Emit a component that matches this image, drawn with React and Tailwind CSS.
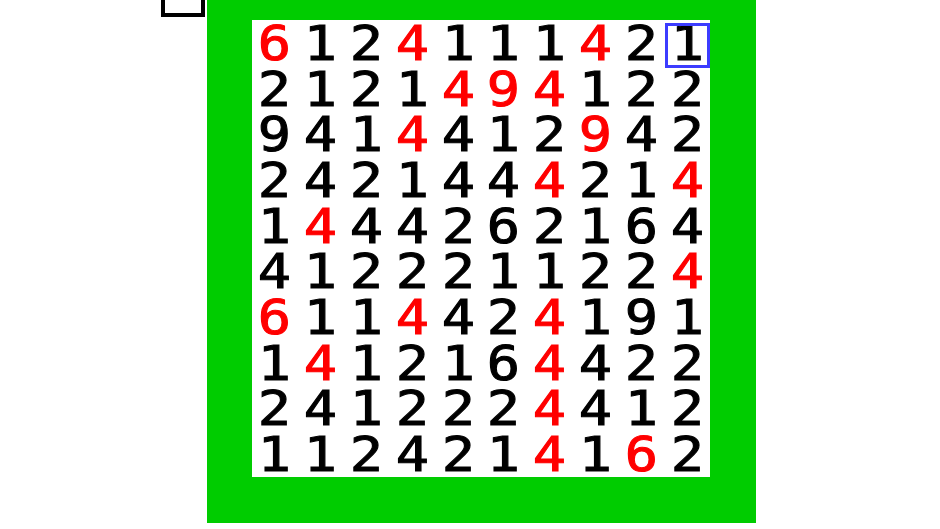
import React from "react";

const rows = [
  ["6r", "1", "2", "4r", "1", "1", "1", "4r", "2", "1"],
  ["2", "1", "2", "1", "4r", "9r", "4r", "1", "2", "2"],
  ["9", "4", "1", "4r", "4", "1", "2", "9r", "4", "2"],
  ["2", "4", "2", "1", "4", "4", "4r", "2", "1", "4r"],
  ["1", "4r", "4", "4", "2", "6", "2", "1", "6", "4"],
  ["4", "1", "2", "2", "2", "1", "1", "2", "2", "4r"],
  ["6r", "1", "1", "4r", "4", "2", "4r", "1", "9", "1"],
  ["1", "4r", "1", "2", "1", "6", "4r", "4", "2", "2"],
  ["2", "4", "1", "2", "2", "2", "4r", "4", "1", "2"],
  ["1", "1", "2", "4", "2", "1", "4r", "1", "6r", "2"],
];

export default function App() {
  return (
    <div className="w-[940px] h-[529px] bg-white overflow-hidden flex items-start pl-[161px]">
      <div className="w-[44px] h-[17px] border-4 border-t-0 border-black bg-white mr-[2px]" />
      <div className="w-[549px] bg-[#00cc00] pt-[20px] pb-[46px] pl-[45px] pr-[46px]">
        <div
          className="bg-white w-[458px] h-[457px] grid grid-cols-10 grid-rows-10"
          style={{ fontFamily: '"DejaVu Sans Mono", "Liberation Mono", monospace' }}
        >
          {rows.flatMap((row, ri) =>
            row.map((c, ci) => {
              const red = c.endsWith("r");
              const d = c[0];
              const sel = ri === 0 && ci === 9;
              return (
                <div key={ri + "-" + ci} className="relative flex items-center justify-center">
                  <span
                    className={
                      "text-[48px] leading-[36px] scale-x-[1.15] [-webkit-text-stroke:1px_currentColor] " +
                      (red ? "text-[#ff0000]" : "text-black")
                    }
                  >
                    {d}
                  </span>
                  {sel && (
                    <div className="absolute left-[1px] right-0 top-[3px] bottom-[-2px] border-[3px] border-[#3c3cff]" />
                  )}
                </div>
              );
            })
          )}
        </div>
      </div>
    </div>
  );
}
